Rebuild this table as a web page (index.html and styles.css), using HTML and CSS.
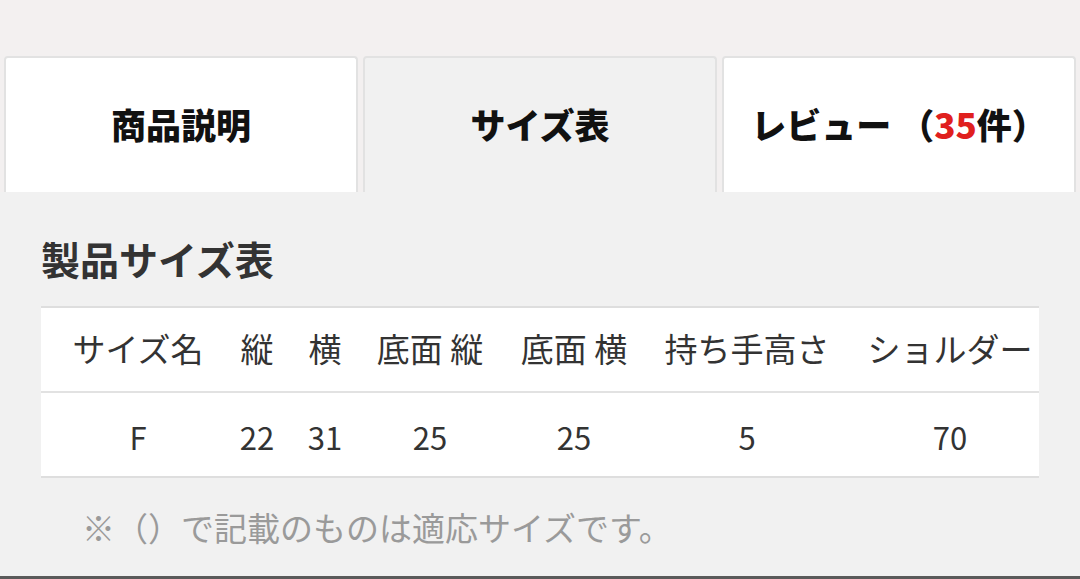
FILE: index.html
```html
<!DOCTYPE html>
<html lang="ja">
<head>
<meta charset="utf-8">
<link rel="stylesheet" href="styles.css">
</head>
<body>
<div class="page">
  <nav class="tabs">
    <div class="tab">商品説明</div>
    <div class="tab tab-active">サイズ表</div>
    <div class="tab">レビュー （<span class="count">35</span>件）</div>
  </nav>
  <section class="content">
    <h2 class="heading">製品サイズ表</h2>
    <div class="table-wrap">
      <table class="size-table">
        <colgroup>
          <col class="c1"><col class="c2"><col class="c3"><col class="c4"><col class="c5"><col class="c6"><col class="c7">
        </colgroup>
        <thead>
          <tr><th>サイズ名</th><th>縦</th><th>横</th><th>底面 縦</th><th>底面 横</th><th>持ち手高さ</th><th>ショルダー</th></tr>
        </thead>
        <tbody>
          <tr><td>F</td><td>22</td><td>31</td><td>25</td><td>25</td><td>5</td><td>70</td></tr>
        </tbody>
      </table>
    </div>
    <p class="note">※（）で記載のものは適応サイズです。</p>
  </section>
</div>
</body>
</html>
```

FILE: styles.css
```css
html, body {
  margin: 0;
  padding: 0;
}
body {
  width: 1080px;
  height: 579px;
  overflow: hidden;
  background: #f3f0f0;
  font-family: "Noto Sans CJK JP", "Noto Sans", sans-serif;
  color: #333;
}
.page {
  display: flex;
  flex-direction: column;
  height: 579px;
}
.tabs {
  display: flex;
  gap: 5px;
  padding: 56px 4px 0;
}
.tab {
  flex: 1;
  height: 136px;
  box-sizing: border-box;
  background: #fff;
  border: 2px solid #e2e2e2;
  border-bottom: none;
  border-radius: 4px 4px 0 0;
  display: flex;
  align-items: center;
  justify-content: center;
  padding-bottom: 4px;
  font-size: 35px;
  font-weight: 900;
  color: #111;
}
.tab-active {
  background: #f1f1f1;
}
.count {
  color: #e0201e;
}
.content {
  flex: 1;
  background: #f1f1f1;
  border-bottom: 3px solid #5a5a5a;
  padding: 43px 41px 0;
}
.heading {
  margin: 0;
  font-size: 39px;
  line-height: 46px;
  font-weight: 700;
  color: #333;
}
.table-wrap {
  margin-top: 25px;
  width: 998px;
  overflow: hidden;
  background: #fff;
  border-top: 2px solid #dedede;
  border-bottom: 2px solid #dedede;
}
.size-table {
  width: 1024px;
  table-layout: fixed;
  border-collapse: collapse;
}
.c1 { width: 194px; }
.c2 { width: 44px; }
.c3 { width: 92px; }
.c4 { width: 118px; }
.c5 { width: 170px; }
.c6 { width: 176px; }
.c7 { width: 230px; }
.size-table th,
.size-table td {
  padding: 0;
  text-align: center;
  white-space: nowrap;
  font-weight: 400;
  color: #333;
}
.size-table th {
  height: 84px;
  padding-bottom: 4px;
  box-sizing: border-box;
  border-bottom: 2px solid #e2e2e2;
  font-size: 33px;
}
.size-table td {
  height: 84px;
  padding-top: 4px;
  box-sizing: border-box;
  font-size: 31px;
}
.note {
  margin: 29px 0 0 41px;
  font-size: 33px;
  line-height: 40px;
  color: #9a9a9a;
}
```
